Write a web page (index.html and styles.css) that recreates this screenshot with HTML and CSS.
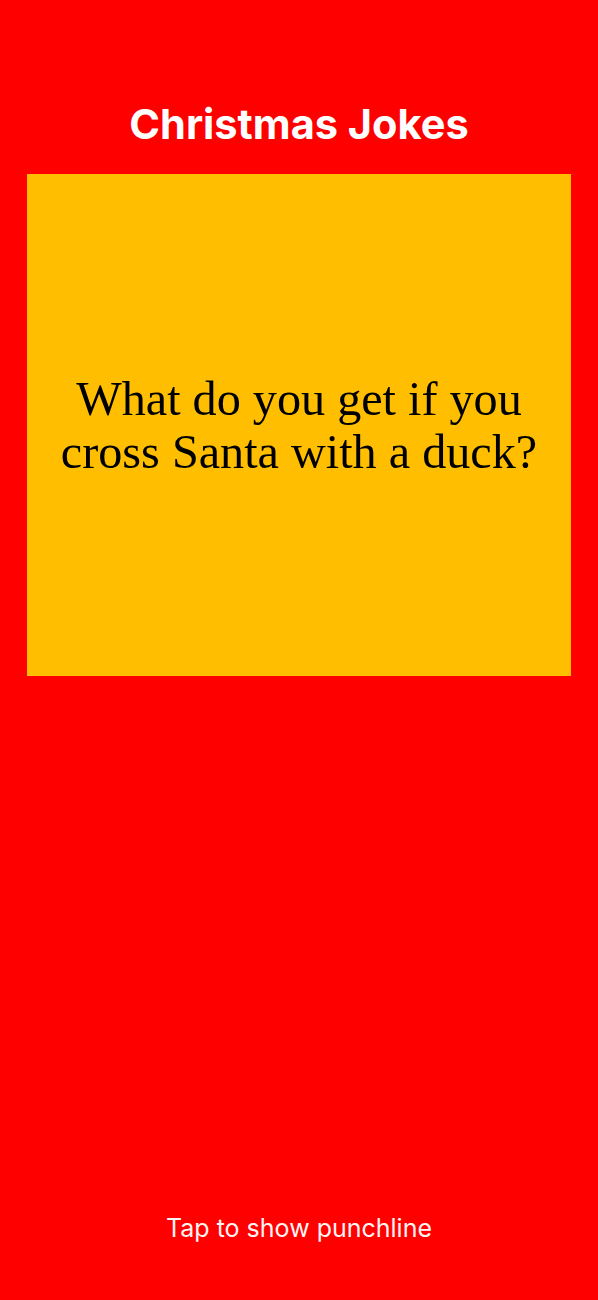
FILE: index.html
```html
<!DOCTYPE html>
<html>
<head>
<meta charset="utf-8">
<link rel="stylesheet" href="styles.css">
</head>
<body>
<div class="screen">
  <h1 class="title">Christmas Jokes</h1>
  <div class="card">
    <p class="joke">What do you get if you cross Santa with a duck?</p>
  </div>
  <div class="spacer"></div>
  <p class="hint">Tap to show punchline</p>
</div>
</body>
</html>
```
FILE: styles.css
```css
html, body {
  margin: 0;
  padding: 0;
  background: #ff0000;
}
.screen {
  width: 598px;
  height: 1300px;
  display: flex;
  flex-direction: column;
  align-items: center;
  box-sizing: border-box;
  padding-top: 100px;
}
.title {
  margin: 0;
  font-family: Inter, "Liberation Sans", sans-serif;
  font-weight: 700;
  font-size: 41.5px;
  line-height: 48px;
  color: #ffffff;
  letter-spacing: 0;
}
.card {
  margin-top: 26px;
  width: 544px;
  height: 502px;
  background: #ffbf00;
  display: flex;
  align-items: center;
  justify-content: center;
}
.joke {
  margin: 0;
  padding: 0 16px;
  font-family: "Liberation Serif", serif;
  font-size: 48.2px;
  line-height: 53px;
  text-align: center;
  color: #000;
}
.spacer { flex: 1; }
.hint {
  margin: 0 0 56px 0;
  font-family: Inter, "Liberation Sans", sans-serif;
  font-size: 25px;
  line-height: 32px;
  color: #fff4f4;
}
```
